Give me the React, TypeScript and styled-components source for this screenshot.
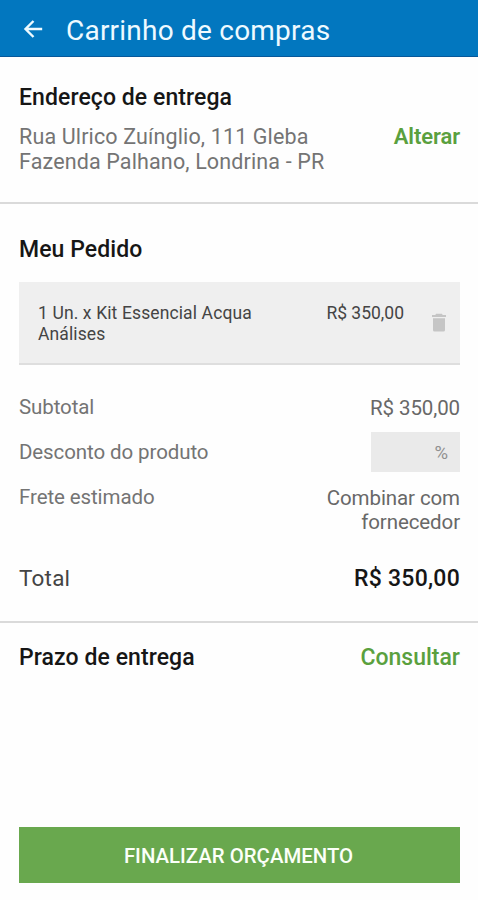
import React from "react";
import styled, { createGlobalStyle } from "styled-components";

const GlobalStyle = createGlobalStyle`
  * { box-sizing: border-box; }
  html, body { margin: 0; padding: 0; background: #fefefe; }
  body { font-family: Roboto, "Liberation Sans", sans-serif; }
`;

const Screen = styled.div`
  width: 100%;
  max-width: 478px;
  height: 900px;
  display: flex;
  flex-direction: column;
  background: #fefefe;
  overflow: hidden;
`;

const AppBar = styled.header`
  height: 57px;
  flex: none;
  display: flex;
  align-items: center;
  gap: 23px;
  padding: 6px 22px 0 23px;
  background: #0277bf;
  border-bottom: 1px solid #07589a;
`;

const BackButton = styled.button`
  display: flex;
  margin-top: -4px;
  padding: 0;
  border: 0;
  background: none;
  color: #eefaff;
`;

const Title = styled.h1`
  margin: 0;
  font-size: 28px;
  line-height: 32px;
  font-weight: 400;
  letter-spacing: 0.22px;
  color: #eefaff;
  white-space: nowrap;
`;

const Section = styled.section<{ $top: number; $height: number; $divided?: boolean }>`
  flex: none;
  height: ${(p) => p.$height}px;
  padding: ${(p) => p.$top}px 18px 0 19px;
  border-bottom: ${(p) => (p.$divided ? "2px solid #dadada" : "0")};
`;

const Heading = styled.h2`
  margin: 0;
  font-size: 23px;
  line-height: 28px;
  font-weight: 500;
  letter-spacing: 0.08px;
  color: #161616;
`;

const Row = styled.div<{ $height: number }>`
  display: flex;
  justify-content: space-between;
  align-items: flex-start;
  min-height: ${(p) => p.$height}px;
`;

const AddressRow = styled(Row)`
  margin-top: 12px;
`;

const Address = styled.p`
  margin: 0;
  font-size: 21.5px;
  line-height: 25px;
  letter-spacing: 0.14px;
  color: #747474;
`;

const Action = styled.button<{ $size: number; $weight: number }>`
  padding: 0;
  border: 0;
  background: none;
  font: ${(p) => p.$weight} ${(p) => p.$size}px/28px Roboto, sans-serif;
  color: #5aa03e;
`;

const AddressAction = styled(Action)`
  line-height: 26px;
  letter-spacing: -0.1px;
`;

const Card = styled.div`
  display: flex;
  height: 83px;
  margin-top: 18px;
  padding: 21px 14px 0 19px;
  background: #efefef;
  border-bottom: 2px solid #dedede;
`;

const ItemName = styled.div`
  flex: 1;
  font-size: 17.5px;
  line-height: 21px;
  letter-spacing: 0.12px;
  color: #444;
`;

const ItemPrice = styled.div`
  font-size: 17.5px;
  line-height: 21px;
  color: #444;
`;

const RemoveButton = styled.button`
  display: flex;
  align-self: flex-start;
  margin: 10px 0 0 28px;
  padding: 0;
  border: 0;
  background: none;
  color: #c5c5c5;
`;

const Summary = styled.div`
  margin-top: 30px;
`;

const Label = styled.span<{ $dark?: boolean }>`
  font-size: ${(p) => (p.$dark ? 22.5 : 20.5)}px;
  line-height: 25px;
  letter-spacing: ${(p) => (p.$dark ? 0.2 : -0.1)}px;
  color: ${(p) => (p.$dark ? "#444" : "#747474")};
`;

const Value = styled.span`
  font-size: 20.5px;
  line-height: 24px;
  padding-top: 1px;
  letter-spacing: -0.1px;
  color: #686868;
  text-align: right;
`;

const Total = styled.strong`
  font-size: 23px;
  line-height: 26px;
  font-weight: 500;
  letter-spacing: 0.25px;
  color: #161616;
`;

const Discount = styled.div`
  width: 89px;
  height: 40px;
  margin-top: -8px;
  padding: 0 12px;
  background: #eaeaea;
  font-size: 18.5px;
  line-height: 42px;
  text-align: right;
  color: #909090;
`;

const Footer = styled.footer`
  margin-top: auto;
  padding: 0 18px 17px 19px;
`;

const SubmitButton = styled.button`
  display: block;
  width: 100%;
  height: 56px;
  padding: 2px 2px 0 0;
  border: 0;
  background: #69a84e;
  font: 500 20.4px/24px Roboto, sans-serif;
  color: #fbfff8;
`;

const BackIcon = () => (
  <svg width="20" height="20" viewBox="0 0 20 20" fill="none" stroke="currentColor" strokeWidth="2.4">
    <path d="M19.200 10H3M10.500 2L2.500 10l8 8" />
  </svg>
);

const TrashIcon = () => (
  <svg width="14" height="19" viewBox="0 0 14 19" fill="currentColor">
    <path d="M0 2h3.200l1-1.300h5.600l1 1.300H14v2.100H0zM1 5.300h12V17q0 1.500-1.500 1.500h-9Q1 18.500 1 17z" />
  </svg>
);

export default function App() {
  return (
    <>
      <GlobalStyle />
      <Screen>
        <AppBar>
          <BackButton aria-label="Voltar"><BackIcon /></BackButton>
          <Title>Carrinho de compras</Title>
        </AppBar>

        <Section $top={27} $height={147} $divided>
          <Heading>Endereço de entrega</Heading>
          <AddressRow $height={50}>
            <Address>
              Rua Ulrico Zuínglio, 111 Gleba<br />Fazenda Palhano, Londrina - PR
            </Address>
            <AddressAction $size={22} $weight={600}>Alterar</AddressAction>
          </AddressRow>
        </Section>

        <Section $top={32} $height={419} $divided>
          <Heading>Meu Pedido</Heading>
          <Card>
            <ItemName>1 Un. x Kit Essencial Acqua<br />Análises</ItemName>
            <ItemPrice>R$ 350,00</ItemPrice>
            <RemoveButton aria-label="Remover item"><TrashIcon /></RemoveButton>
          </Card>
          <Summary>
            <Row $height={45}>
              <Label>Subtotal</Label>
              <Value>R$ 350,00</Value>
            </Row>
            <Row $height={45}>
              <Label>Desconto do produto</Label>
              <Discount>%</Discount>
            </Row>
            <Row $height={81}>
              <Label>Frete estimado</Label>
              <Value>Combinar com<br />fornecedor</Value>
            </Row>
            <Row $height={25}>
              <Label $dark>Total</Label>
              <Total>R$ 350,00</Total>
            </Row>
          </Summary>
        </Section>

        <Section $top={21} $height={60}>
          <Row $height={28}>
            <Heading>Prazo de entrega</Heading>
            <Action $size={23} $weight={500}>Consultar</Action>
          </Row>
        </Section>

        <Footer>
          <SubmitButton>FINALIZAR ORÇAMENTO</SubmitButton>
        </Footer>
      </Screen>
    </>
  );
}
